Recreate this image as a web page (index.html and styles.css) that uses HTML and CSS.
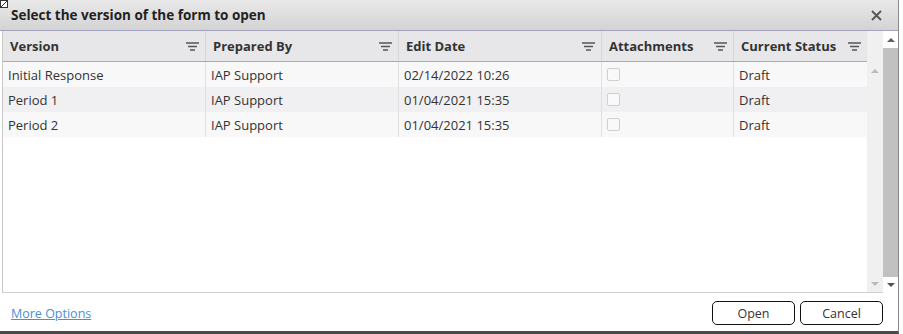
FILE: index.html
```html
<!DOCTYPE html>
<html>
<head>
<meta charset="utf-8">
<link rel="stylesheet" href="styles.css">
</head>
<body>
<div class="dialog">
  <div class="titlebar">
    <span class="broken"></span>
    <span class="title">Select the version of the form to open</span>
    <span class="close">
      <svg width="11" height="11" viewBox="0 0 11 11"><path d="M1 1L10 10M10 1L1 10" stroke="#555" stroke-width="1.8"/></svg>
    </span>
  </div>
  <div class="main">
    <div class="grid">
      <div class="table">
        <div class="head">
          <div class="hc c1"><span>Version</span><svg class="flt" width="13" height="9" viewBox="0 0 13 9"><path d="M0 1H13M2 4.5H11M4 8H9" stroke="#555" stroke-width="1.3"/></svg></div>
          <div class="hc c2"><span>Prepared By</span><svg class="flt" width="13" height="9" viewBox="0 0 13 9"><path d="M0 1H13M2 4.5H11M4 8H9" stroke="#555" stroke-width="1.3"/></svg></div>
          <div class="hc c3"><span>Edit Date</span><svg class="flt" width="13" height="9" viewBox="0 0 13 9"><path d="M0 1H13M2 4.5H11M4 8H9" stroke="#555" stroke-width="1.3"/></svg></div>
          <div class="hc c4"><span>Attachments</span><svg class="flt" width="13" height="9" viewBox="0 0 13 9"><path d="M0 1H13M2 4.5H11M4 8H9" stroke="#555" stroke-width="1.3"/></svg></div>
          <div class="hc c5"><span>Current Status</span><svg class="flt" width="13" height="9" viewBox="0 0 13 9"><path d="M0 1H13M2 4.5H11M4 8H9" stroke="#555" stroke-width="1.3"/></svg></div>
        </div>
        <div class="row">
          <div class="cell c1">Initial Response</div>
          <div class="cell c2">IAP Support</div>
          <div class="cell c3">02/14/2022 10:26</div>
          <div class="cell c4"><span class="chk"></span></div>
          <div class="cell c5">Draft</div>
        </div>
        <div class="row alt">
          <div class="cell c1">Period 1</div>
          <div class="cell c2">IAP Support</div>
          <div class="cell c3">01/04/2021 15:35</div>
          <div class="cell c4"><span class="chk"></span></div>
          <div class="cell c5">Draft</div>
        </div>
        <div class="row">
          <div class="cell c1">Period 2</div>
          <div class="cell c2">IAP Support</div>
          <div class="cell c3">01/04/2021 15:35</div>
          <div class="cell c4"><span class="chk"></span></div>
          <div class="cell c5">Draft</div>
        </div>
      </div>
      <div class="iscroll">
        <div class="ihead"></div>
        <span class="arr up light"></span>
        <div class="ispace"></div>
        <span class="arr down light"></span>
      </div>
    </div>
    <div class="oscroll">
      <span class="arr up dark"></span>
      <div class="thumb"></div>
      <span class="arr down dark"></span>
    </div>
  </div>
  <div class="footer">
    <a class="more" href="#">More Options</a>
    <div class="buttons">
      <button class="btn">Open</button>
      <button class="btn">Cancel</button>
    </div>
  </div>
</div>
</body>
</html>
```
FILE: styles.css
```css
html, body {
  margin: 0;
  padding: 0;
  background: #fff;
}
body {
  font-family: "Open Sans", "DejaVu Sans", sans-serif;
  font-size: 13px;
  color: #333;
}
.dialog {
  width: 898px;
  height: 331px;
  border-right: 1px solid #8a8a8a;
  border-bottom: 3px solid #4a4a4a;
  display: flex;
  flex-direction: column;
  background: #fff;
}
.titlebar {
  height: 30px;
  flex: none;
  background: linear-gradient(#e9e9e9, #d3d3d3);
  border-bottom: 1px solid #a3a3bd;
  display: flex;
  align-items: center;
  position: relative;
}
.broken {
  position: absolute;
  left: 0;
  top: 0;
  width: 6px;
  height: 6px;
  border: 1px solid #333;
  background: linear-gradient(135deg, #fff 45%, #333 50%, #fff 55%);
}
.title {
  margin-left: 11px;
  margin-top: -1px;
  font-weight: bold;
  font-size: 13.5px;
  color: #222;
  flex: 1;
}
.close {
  width: 11px;
  height: 11px;
  margin-right: 16px;
  display: flex;
}
.main {
  height: 262px;
  flex: none;
  display: flex;
  padding-left: 2px;
}
.grid {
  flex: 1;
  display: flex;
  border-left: 1px solid #c8c8c8;
  border-bottom: 1px solid #d0d0d0;
}
.table {
  flex: 1;
  display: flex;
  flex-direction: column;
}
.head {
  height: 30px;
  display: flex;
  background: #e7e7e9;
  border-bottom: 1px solid #a9a9b3;
}
.hc {
  display: flex;
  align-items: center;
  justify-content: space-between;
  padding: 0 6px 0 7px;
  font-weight: bold;
  font-size: 13px;
  color: #333;
  border-right: 1px solid #d6d6d8;
  box-sizing: border-box;
}
.flt { flex: none; }
.c1 { width: 203px; }
.c2 { width: 193px; }
.c3 { width: 203px; }
.c4 { width: 132px; }
.c5 { width: 133px; border-right: none; }
.row {
  display: flex;
  height: 25px;
  background: #f8f8f8;
}
.row.alt { background: #f0f0f2; }
.cell {
  display: flex;
  align-items: center;
  padding-left: 5px;
  box-sizing: border-box;
  border-right: 1px solid #e0e0e0;
  color: #333;
}
.c1.cell { padding-left: 5px; }
.c5.cell { border-right: none; }
.chk {
  width: 11px;
  height: 11px;
  border: 1px solid #cfcfcf;
  border-radius: 2px;
  background: #f9f9f9;
}
.iscroll {
  width: 16px;
  background: #f0f0f0;
  display: flex;
  flex-direction: column;
  align-items: center;
}
.ihead { height: 31px; flex: none; }
.ispace { flex: 1; }
.arr {
  width: 0;
  height: 0;
  border-left: 4px solid transparent;
  border-right: 4px solid transparent;
  flex: none;
}
.arr.up { border-bottom: 4px solid #bbb; margin-top: 7px; }
.arr.down { border-top: 4px solid #bbb; margin-bottom: 6px; }
.arr.up.dark { border-bottom-color: #606060; margin-top: 7px; }
.arr.down.dark { border-top-color: #505050; margin-bottom: 6px; }
.oscroll {
  width: 15px;
  display: flex;
  flex-direction: column;
  align-items: center;
  background: #fff;
}
.thumb {
  flex: 1;
  width: 15px;
  background: #c1c1c1;
  margin: 6px 0 6px;
}
.footer {
  flex: 1;
  display: flex;
  align-items: center;
  justify-content: space-between;
  padding: 0 15px 0 11px;
}
.more {
  color: #4a8fd6;
  font-size: 12.5px;
  text-decoration: underline;
  margin-top: 3px;
}
.buttons {
  display: flex;
  gap: 5px;
  margin-top: 2px;
}
.btn {
  width: 83px;
  height: 24px;
  border: 1px solid #111;
  border-radius: 5px;
  background: #fff;
  font-family: "Open Sans", "DejaVu Sans", sans-serif;
  font-size: 12.5px;
  color: #333;
  padding: 0;
}
```
